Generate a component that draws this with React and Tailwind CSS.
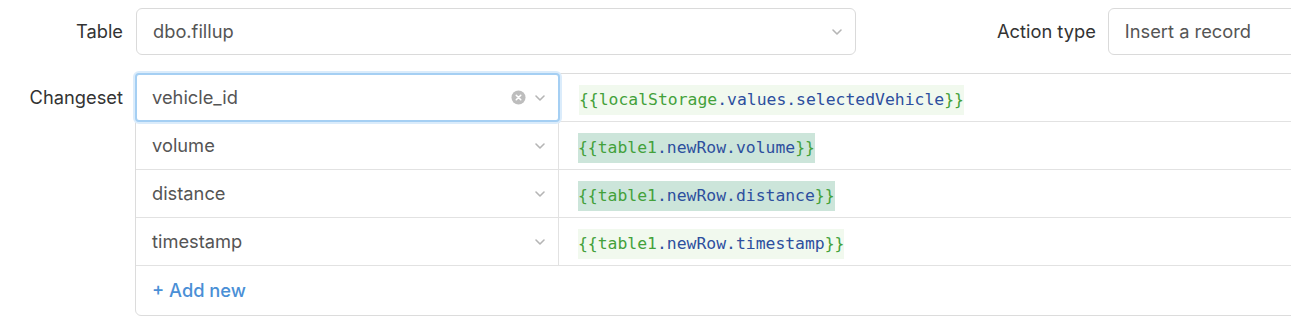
import React from 'react';

const Chevron = () => (
  <svg width="12" height="8" viewBox="0 0 12 8" fill="none" className="shrink-0">
    <path d="M2 2l4 4 4-4" stroke="#b5b5b5" strokeWidth="1.6" strokeLinecap="round" strokeLinejoin="round" />
  </svg>
);

const ClearIcon = () => (
  <svg width="15" height="15" viewBox="0 0 16 16" className="shrink-0">
    <circle cx="8" cy="8" r="7.5" fill="#bdbdbd" />
    <path d="M5.6 5.6l4.8 4.8M10.4 5.6l-4.8 4.8" stroke="#fff" strokeWidth="1.7" strokeLinecap="round" />
  </svg>
);

const rows = [
  { key: 'vehicle_id', root: 'localStorage', rest: '.values.selectedVehicle', hl: 'bg-[#f1f9ee]', focused: true },
  { key: 'volume', root: 'table1', rest: '.newRow.volume', hl: 'bg-[#cce5da]' },
  { key: 'distance', root: 'table1', rest: '.newRow.distance', hl: 'bg-[#cce5da]' },
  { key: 'timestamp', root: 'table1', rest: '.newRow.timestamp', hl: 'bg-[#f1f9ee]' },
];

function Expr({ root, rest, hl }) {
  return (
    <span className={`${hl} mt-[5px] py-[3px] font-['DejaVu_Sans_Mono',monospace] text-[16.4px]`}>
      <span className="text-[#43a13a]">{'{{'}</span>
      <span className="text-[#43a13a]">{root}</span>
      <span className="text-[#2d4f9e]">{rest}</span>
      <span className="text-[#43a13a]">{'}}'}</span>
    </span>
  );
}

export default function App() {
  return (
    <div className="w-[1291px] h-[320px] overflow-hidden bg-white font-['Inter',sans-serif] text-[18.3px]">
      <div className="flex items-center pt-[8px]">
        <div className="w-[123px] shrink-0 text-right text-[#333]">Table</div>
        <div className="ml-[13px] w-[720px] h-[47px] shrink-0 flex items-center justify-between pl-[16px] pr-[12px] border border-[#dadada] rounded-[6px] text-[#555]">
          <span>dbo.fillup</span>
          <Chevron />
        </div>
        <div className="ml-[141px] shrink-0 text-[#333]">Action type</div>
        <div className="ml-[12px] w-[240px] h-[47px] shrink-0 flex items-center pl-[16px] border border-[#dadada] rounded-[6px] text-[#555]">
          Insert a record
        </div>
      </div>

      <div className="flex items-start mt-[18px]">
        <div className="w-[123px] shrink-0 text-right text-[#333] h-[50px] flex items-center justify-end">Changeset</div>
        <div className="ml-[12px] w-[1200px] shrink-0 border border-[#dcdcdc] rounded-[6px]">
          {rows.map((r) => (
            <div key={r.key} className="flex h-[48px] border-b border-[#e2e2e2]">
              {r.focused ? (
                <div className="relative z-10 -ml-px -mt-px w-[425px] h-[49px] shrink-0 flex items-center justify-between pl-[15px] pr-[12px] border-2 border-[#a5cff3] rounded-[4px] shadow-[0_0_0_2px_#dbecfb] bg-white text-[#555]">
                  <span>{r.key}</span>
                  <span className="flex items-center gap-[8px]">
                    <ClearIcon />
                    <Chevron />
                  </span>
                </div>
              ) : (
                <div className="w-[423px] shrink-0 flex items-center justify-between pl-[16px] pr-[12px] border-r border-[#e2e2e2] text-[#555]">
                  <span>{r.key}</span>
                  <Chevron />
                </div>
              )}
              <div className="flex-1 flex items-center pl-[19px]">
                <Expr root={r.root} rest={r.rest} hl={r.hl} />
              </div>
            </div>
          ))}
          <div className="h-[49px] flex items-center pl-[16px] pt-[1px] text-[#4a8fd6] font-medium">
            + Add new
          </div>
        </div>
      </div>
    </div>
  );
}
